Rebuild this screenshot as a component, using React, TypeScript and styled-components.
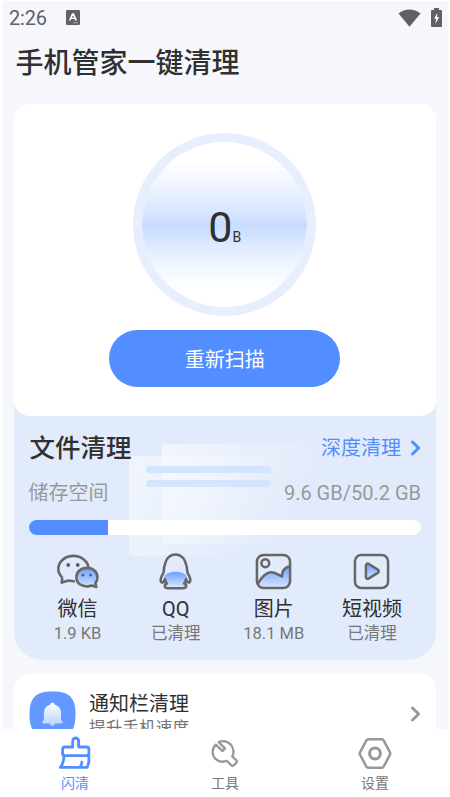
import React from 'react';
import styled, { createGlobalStyle } from 'styled-components';

const GlobalStyle = createGlobalStyle`
  *, *::before, *::after { box-sizing: border-box; }
  body { margin: 0; background: #fff; }
  svg { display: block; flex: none; }
`;

const Screen = styled.div`
  width: 450px;
  height: 797px;
  display: flex;
  flex-direction: column;
  overflow: hidden;
  background: #fff;
  color: #303030;
  font-family: Roboto, 'Noto Sans CJK SC', sans-serif;
`;

const Content = styled.main`
  flex: 1;
  min-height: 0;
  overflow: hidden;
  margin: 1px 2px 0;
  padding: 0 12.5px 0 12px;
  background: #f5f7fc;
`;

const StatusBar = styled.header`
  height: 34px;
  display: flex;
  align-items: center;
  padding: 0 0 1px;
  margin: 0 -6.5px 0 -5px;
  color: #606165;
`;

const Clock = styled.span`
  width: 57px;
  font-size: 20px;
  line-height: 24px;
  letter-spacing: -0.2px;
`;

const StatusIcons = styled.div`
  margin-left: auto;
  display: flex;
  align-items: center;
  gap: 10px;
`;

const Title = styled.h1`
  margin: 9px 0 0 1.5px;
  height: 60px;
  font-size: 28px;
  line-height: 40px;
  font-weight: 500;
`;

const ScanCard = styled.section`
  position: relative;
  height: 311.5px;
  border-radius: 15px;
  background: #fff;
  display: flex;
  flex-direction: column;
  align-items: center;
  padding-top: 29px;
`;

const Gauge = styled.div`
  width: 183px;
  height: 183px;
  border: 9px solid #e7efff;
  border-radius: 50%;
  background: linear-gradient(#fff 12%, #edf3ff 28%, #dce9ff 40%, #c9dcff 51%, #dce9ff 62%, #f2f7ff 76%, #fff 90%) padding-box;
  display: flex;
  align-items: baseline;
  justify-content: center;
  padding-top: 58.5px;
`;

const GaugeValue = styled.span`
  font-size: 43px;
  line-height: 52px;
`;

const GaugeUnit = styled.span`
  font-size: 14px;
`;

const ScanButton = styled.button`
  margin-top: 14px;
  width: 231px;
  height: 56.5px;
  border: 0;
  border-radius: 29px;
  padding: 3px 0 0;
  background: #528eff;
  color: #fff;
  font: 20px/28px Roboto, 'Noto Sans CJK SC', sans-serif;
`;

const FilePanel = styled.section`
  position: relative;
  isolation: isolate;
  height: 264px;
  margin-top: -20px;
  padding: 34.5px 14.5px 0 14.5px;
  border-radius: 0 0 28px 28px;
  background: #e2ebfb;
`;

const CleanerStack = styled.div`
  display: flex;
  flex-direction: column;
  & > ${ScanCard} { z-index: 1; }
`;

const Sheet = styled.div<{ $x: number; $y: number; $w: number }>`
  position: absolute;
  z-index: -1;
  left: ${p => p.$x}px;
  top: ${p => p.$y}px;
  width: ${p => p.$w}px;
  height: 100px;
  border-radius: 4px;
  background: linear-gradient(115deg, rgba(255, 255, 255, 0.5), rgba(255, 255, 255, 0) 78%);
`;

const SheetLine = styled.div<{ $y: number }>`
  position: absolute;
  z-index: -1;
  left: 132px;
  top: ${p => p.$y}px;
  width: 125px;
  height: 7px;
  border-radius: 4px;
  background: #d4e4fd;
`;

const Row = styled.div`
  display: flex;
  justify-content: space-between;
  align-items: center;
`;

const PanelTitle = styled.h2`
  margin: 0 0 0 1px;
  font-size: 25.5px;
  line-height: 36px;
  font-weight: 500;
`;

const DeepLink = styled.a`
  display: flex;
  align-items: center;
  gap: 9px;
  font-size: 20px;
  line-height: 28px;
  color: #528eff;
`;

const StorageRow = styled(Row)`
  margin-top: 13px;
  height: 28px;
  font-size: 20px;
  line-height: 28px;
  color: #999;
`;

const Track = styled.div`
  margin-top: 12.5px;
  height: 15px;
  border-radius: 8px;
  background: #fff;
  overflow: hidden;
`;

const Fill = styled.div<{ $width: number }>`
  width: ${p => p.$width}px;
  height: 100%;
  background: #528eff;
`;

const Categories = styled.div`
  display: grid;
  grid-template-columns: repeat(4, 1fr);
  margin-top: 18px;
`;

const Category = styled.div`
  display: flex;
  flex-direction: column;
  align-items: center;
  white-space: nowrap;
`;

const CategoryName = styled.div`
  margin-top: 5px;
  font-size: 20px;
  line-height: 28px;
`;

const CategorySize = styled.div`
  font-size: 16.5px;
  line-height: 22px;
  color: #777;
`;

const NoticeCard = styled.section`
  height: 90px;
  margin-top: 14.5px;
  padding: 16.5px 15px 0 14.5px;
  border-radius: 15px;
  background: #fff;
  display: flex;
  align-items: flex-start;
`;

const NoticeText = styled.div`
  flex: 1;
  margin-left: 13.5px;
`;

const NoticeTitle = styled.div`
  margin-top: -1px;
  font-size: 20px;
  line-height: 28px;
`;

const NoticeHint = styled.div`
  font-size: 16.7px;
  line-height: 22px;
  color: #777;
`;

const NoticeArrow = styled.div`
  margin-top: 15px;
`;

const TabBar = styled.nav`
  height: 68px;
  display: grid;
  grid-template-columns: repeat(3, 1fr);
  background: #fff;
`;

const Tab = styled.div<{ $active?: boolean }>`
  display: flex;
  flex-direction: column;
  align-items: center;
  padding-top: 7px;
  font-size: 14px;
  line-height: 20px;
  color: ${p => (p.$active ? '#528eff' : '#777')};
  svg { margin-bottom: 1px; color: ${p => (p.$active ? '#528eff' : '#989898')}; }
`;

const Chevron = ({ color }: { color: string }) => (
  <svg width="11" height="16" viewBox="0 0 11 16" fill="none" stroke={color} strokeWidth="3">
    <path d="M2.5 2 8.6 8 2.5 14" strokeLinecap="round" strokeLinejoin="round" />
  </svg>
);

const KeyboardIcon = () => (
  <svg width="14" height="15" viewBox="0 0 14 15">
    <rect width="14" height="15" rx="1.3" fill="#606165" />
    <path d="m3.7 10.5 2.8-6.4h1L10.3 10.5M4.8 8.3h4.3" fill="none" stroke="#fff" strokeWidth="1.6" />
    <path d="M7 12.8h5" stroke="#bbb" strokeWidth=".8" />
  </svg>
);

const WifiIcon = () => (
  <svg width="23" height="18" viewBox="0 0 23 18">
    <path d="M.5 4.5C7-1 16-1 22.5 4.5L11.5 17.7Z" fill="#606165" />
  </svg>
);

const BatteryIcon = () => (
  <svg width="11" height="19" viewBox="0 0 11 19">
    <path d="M3 0h5v2h2q1 0 1 1v15q0 1-1 1H1q-1 0-1-1V3q0-1 1-1h2Z" fill="#606165" />
    <path d="M6.3 5 3 10.8h2.2L4.3 16 8.3 9H6Z" fill="#fff" />
  </svg>
);

const BlueFade = ({ id }: { id: string }) => (
  <defs>
    <linearGradient id={id} x1="0" y1="0" x2="0" y2="1">
      <stop offset="0" stopColor="#6c9fff" />
      <stop offset="1" stopColor="#d4e3ff" />
    </linearGradient>
  </defs>
);

const WechatIcon = () => (
  <svg width="44" height="37" viewBox="-1 0 46 38" fill="none" stroke="#666" strokeWidth="2.7" strokeLinejoin="round">
    <BlueFade id="wx" />
    <path d="M5.6 25.3C2.8 22.7 1.4 20 1.4 16.4c0-7.8 7-13.7 15.9-13.7 8.3 0 15 5.6 15.8 12.5M18.8 29.2c-3 .2-4.5-.1-6.5-.7L5 30.6l.6-5.3" />
    <path d="M31.3 15.2c6.4 0 11 4.3 11 9.7 0 2.7-.8 4.7-2.1 6.3l1 4-4.7-1.5c-7.4 2.6-16.2-.7-16.2-8.8 0-5.4 4.7-9.7 11-9.7Z" fill="url(#wx)" />
    <g fill="#606060" stroke="none"><circle cx="11.8" cy="12.2" r="2" /><circle cx="21.7" cy="12.2" r="2" /><circle cx="27.2" cy="22.8" r="1.5" /><circle cx="35" cy="22.8" r="1.5" /></g>
  </svg>
);

const QqIcon = () => (
  <svg width="37" height="37" viewBox="0 0 38 38" fill="none" stroke="#666" strokeWidth="2.6" strokeLinejoin="round" strokeLinecap="round">
    <BlueFade id="qq" />
    <path d="M7.6 24C10 17.8 28 17.8 30.4 24v8c-1 1.8-2.3 2.3-3 2.3H10.5c-1.4-.5-2.5-1.3-2.9-2.3Z" fill="url(#qq)" stroke="none" />
    <path d="M8.2 27.4C7.4 29 6.2 30.4 5 30.4c-2.2-.6-1.3-5.8 1.6-9.8C7 16 7.5 12.8 8.8 9.5 10.7 4.2 14 1.6 19 1.6s8.3 2.6 10.2 7.9c1.3 3.3 1.8 6.5 2.2 11.1 2.9 4 3.8 9.2 1.6 9.8-1.2 0-2.4-1.4-3.2-3" />
    <path d="M8.2 26.8c.1 1.8.9 3.4 2 4.6-1.5.4-2.2 1.3-2.2 2.4 0 1.8 1.8 2.3 4 2.3h14c2.2 0 4-.5 4-2.3 0-1.1-.7-2-2.2-2.4 1.1-1.2 1.9-2.8 2-4.6" />
  </svg>
);

const PictureIcon = () => (
  <svg width="37" height="37" viewBox="0 0 38 38" fill="none" stroke="#666" strokeWidth="2.6">
    <BlueFade id="pic" />
    <path d="M3 31c4-6.5 8.3-11 13.5-11 4.8 0 6.7 2.7 11 4 .1-5.3 1.8-8.5 7.5-10.3V31q-1 4-5 4H8q-4 0-5-4Z" fill="url(#pic)" stroke="none" />
    <path d="M3 31.5C7 24.5 11 19.8 16.5 19.8c5 0 6.8 2.8 11.2 4.1 0-5.5 2.2-8.8 7.8-10.2" />
    <rect x="2" y="2" width="34" height="34" rx="7" /><circle cx="10.6" cy="10.5" r="4" />
  </svg>
);

const VideoIcon = () => (
  <svg width="37" height="37" viewBox="0 0 38 38" fill="none" stroke="#666" strokeWidth="2.6" strokeLinejoin="round">
    <BlueFade id="vid" />
    <rect x="2" y="2" width="34" height="34" rx="6.5" />
    <path d="M13.3 13c0-2 1.4-2.6 3-1.7l9.1 5.8c1.5 1 1.5 2.4 0 3.3l-9.1 5.7c-1.6 1-3 .2-3-1.6Z" fill="url(#vid)" />
  </svg>
);

const BellIcon = () => (
  <svg width="47" height="47" viewBox="0 0 47 47">
    <defs><linearGradient id="bell" x1="0" y1="0" x2="0" y2="1"><stop stopColor="#fff" /><stop offset="1" stopColor="#b8d2ff" /></linearGradient></defs>
    <path d="M23.5.5C40 .5 46.5 6 46.5 23.5S40 46.5 23.5 46.5.5 41 .5 23.5 7 .5 23.5.5Z" fill="#6298ff" />
    <path d="M23.5 11.4c1.3 0 2.3 1 2.3 2.4 4.2 1.1 6.3 4 6.3 8.8v6.2l1.2 1.4c.8 1 .4 2.2-.9 2.2h-6.2c-.3 1.7-1.2 2.4-2.7 2.4s-2.4-.7-2.7-2.4h-6.2c-1.3 0-1.7-1.2-.9-2.2l1.2-1.4v-6.2c0-4.8 2.1-7.7 6.3-8.8 0-1.4 1-2.4 2.3-2.4Z" fill="url(#bell)" />
  </svg>
);

const BroomIcon = () => (
  <svg width="34" height="36" viewBox="-.5 0 34 36" fill="none" stroke="currentColor" strokeWidth="2.8" strokeLinejoin="round" strokeLinecap="round">
    <path d="M14.2 11V5.3c0-4.4 6-4.4 6 0V11H28q2.4 0 2.4 2.4v4q0 2.2-2.4 2.2H6.5q-2.4 0-2.4-2.2v-4Q4.1 11 6.5 11Z" />
    <path d="M5.6 20c-.4 5-1.2 8.5-3.8 11.4h26.8c1.8-3.5 2.2-7 1.7-11.4M21.8 30.8c.9-1.4 1.4-2.7 1.6-4.7" />
  </svg>
);

const WrenchIcon = () => (
  <svg width="34" height="36" viewBox="0 0 34 36" fill="none" stroke="currentColor" strokeWidth="2.3" strokeLinejoin="round" strokeLinecap="round">
    <path d="M10.7 6.1 17 12.4l-2.4 2.7L7.8 8.6C3 13.2 4 20.8 9 24c3.1 2 6.9 2 9.7.8l4.5 4.5q1.3 1.3 2.6 0l2.4-2.4q1.3-1.3 0-2.6l-3.9-3.9c2-3.4 1.5-8.8-1.8-12-3.2-3.2-7.8-4-11.8-2.3Z" />
  </svg>
);

const SettingsIcon = () => (
  <svg width="34" height="36" viewBox="0 0 34 36" fill="none" stroke="currentColor" strokeWidth="2.5" strokeLinejoin="round">
    <path d="M10.2 3.3h13.6q1.2 0 1.8 1l6.4 12q.6 1.2 0 2.4l-6.4 12q-.6 1-1.8 1H10.2q-1.2 0-1.8-1l-6.4-12q-.6-1.2 0-2.4l6.4-12q.6-1 1.8-1Z" />
    <circle cx="17" cy="17.5" r="5.4" strokeWidth="3" />
  </svg>
);

const categories = [
  { name: '微信', size: '1.9 KB', icon: <WechatIcon /> },
  { name: 'QQ', size: '已清理', icon: <QqIcon /> },
  { name: '图片', size: '18.1 MB', icon: <PictureIcon /> },
  { name: '短视频', size: '已清理', icon: <VideoIcon /> },
];

export default function App() {
  return (
    <Screen>
      <GlobalStyle />
      <Content>
        <StatusBar>
          <Clock>2:26</Clock>
          <KeyboardIcon />
          <StatusIcons><WifiIcon /><BatteryIcon /></StatusIcons>
        </StatusBar>
        <Title>手机管家一键清理</Title>
        <CleanerStack>
          <ScanCard>
            <Gauge><GaugeValue>0</GaugeValue><GaugeUnit>B</GaugeUnit></Gauge>
            <ScanButton>重新扫描</ScanButton>
          </ScanCard>
          <FilePanel>
            <Sheet $x={115} $y={60.5} $w={165} />
            <Sheet $x={147.5} $y={48} $w={170} />
            <SheetLine $y={70} />
            <SheetLine $y={84} />
            <Row>
              <PanelTitle>文件清理</PanelTitle>
              <DeepLink>深度清理 <Chevron color="#528eff" /></DeepLink>
            </Row>
            <StorageRow><span>储存空间</span><span>9.6 GB/50.2 GB</span></StorageRow>
            <Track><Fill $width={79} /></Track>
            <Categories>
              {categories.map(c => (
                <Category key={c.name}>
                  {c.icon}
                  <CategoryName>{c.name}</CategoryName>
                  <CategorySize>{c.size}</CategorySize>
                </Category>
              ))}
            </Categories>
          </FilePanel>
        </CleanerStack>
        <NoticeCard>
          <BellIcon />
          <NoticeText>
            <NoticeTitle>通知栏清理</NoticeTitle>
            <NoticeHint>提升手机速度</NoticeHint>
          </NoticeText>
          <NoticeArrow><Chevron color="#999" /></NoticeArrow>
        </NoticeCard>
      </Content>
      <TabBar>
        <Tab $active><BroomIcon />闪清</Tab>
        <Tab><WrenchIcon />工具</Tab>
        <Tab><SettingsIcon />设置</Tab>
      </TabBar>
    </Screen>
  );
}
